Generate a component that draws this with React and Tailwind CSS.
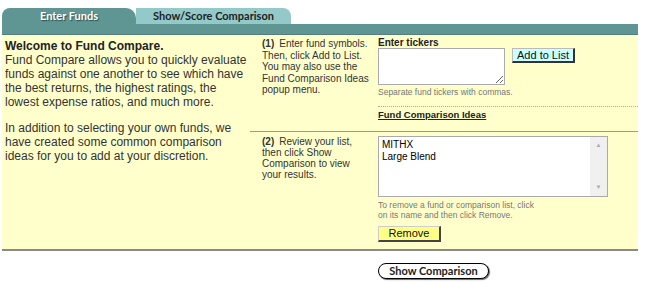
import React from 'react';

const base = "font-['Liberation_Sans',Arial,sans-serif]";

function ListBox() {
  return (
    <div className="flex w-[230px] h-[61px] border border-[#aaa] bg-white">
      <div className="flex-1 pl-[3px] pt-[2px] text-[10px] leading-[12px] text-black">
        <div>MITHX</div>
        <div>Large Blend</div>
      </div>
      <div className="w-[17px] bg-[#f0f0f0] flex flex-col justify-between items-center py-[5px] text-[6px] leading-[7px] text-[#aaa]">
        <span>▲</span>
        <span>▼</span>
      </div>
    </div>
  );
}

export default function App() {
  return (
    <div className={`w-[651px] h-[284px] bg-white ${base} text-[#222]`}>
      <div className="ml-[2px] w-[636px] pt-[8px]">
        {/* tabs */}
        <div className="flex h-[16px] items-end">
          <div className="w-[134px] h-[16px] bg-[#5f9593] rounded-tl-[8px] rounded-tr-[10px] text-white text-[11px] leading-[16px] font-bold text-center [text-shadow:1px_1px_1px_#2d4f4e] font-['Lato',sans-serif]">
            Enter Funds
          </div>
          <div className="w-[155px] h-[16px] bg-[#93c9c9] rounded-tr-[8px] text-[#222] text-[11px] leading-[16px] font-bold text-center font-['Lato',sans-serif]">
            Show/Score Comparison
          </div>
        </div>
        <div className="h-[11px] bg-[#5f9593] border-b border-[#557f7d]" />

        {/* main panel */}
        <div className="flex h-[216px] bg-[#ffffcc] border-b-2 border-[#8a8a8a]">
          <div className="w-[248px] pl-[3px] pt-[4px] text-[12px] leading-[14px] text-[#333]">
            <div className="w-[245px]">
              <div className="font-bold text-[#222]">Welcome to Fund Compare.</div>
              <p>
                Fund Compare allows you to quickly evaluate funds against one another to see which have the best
                returns, the highest ratings, the lowest expense ratios, and much more.
              </p>
              <p className="mt-[12px]">
                In addition to selecting your own funds, we have created some common comparison ideas for you to
                add at your discretion.
              </p>
            </div>
          </div>

          <div className="flex-1 flex flex-col">
            {/* step 1 */}
            <div className="flex h-[96px]">
              <div className="w-[128px] pl-[12px] pt-[3px] text-[10px] leading-[11.5px] text-[#333]">
                <div className="w-[108px]">
                  <div className="flex gap-[5px]">
                    <span className="font-bold">(1)</span>
                    <span>Enter fund symbols.</span>
                  </div>
                  <div>Then, click Add to List. You may also use the Fund Comparison Ideas popup menu.</div>
                </div>
              </div>
              <div className="flex-1 pt-[3px]">
                <div className="text-[10px] leading-[10px] font-bold text-[#222]">Enter tickers</div>
                <div className="flex gap-[7px]">
                  <textarea className="w-[127px] h-[37px] border border-[#aaa] bg-white block" />
                  <button className="h-[15px] w-[63px] bg-[#ccffff] border border-[#bbb] border-r-2 border-b-2 border-r-[#333] border-b-[#333] text-[11px] leading-[12px] text-[#111]">
                    Add to List
                  </button>
                </div>
                <div className="mt-[2px] text-[8.5px] leading-[10px] text-[#777]">Separate fund tickers with commas.</div>
                <div className="mt-[9px] border-t border-dotted border-[#aaa] pt-[3px] text-[9.5px] leading-[10px]">
                  <span className="font-bold underline text-[#222]">Fund Comparison Ideas</span>
                </div>
              </div>
            </div>

            {/* step 2 */}
            <div className="flex flex-1 border-t border-[#999]">
              <div className="w-[128px] pl-[12px] pt-[4px] text-[10px] leading-[11px] text-[#333]">
                <div className="w-[108px]">
                  <div className="flex gap-[5px]">
                    <span className="font-bold">(2)</span>
                    <span>Review your list,</span>
                  </div>
                  <div>then click Show Comparison to view your results.</div>
                </div>
              </div>
              <div className="flex-1 pt-[4px]">
                <ListBox />
                <div className="mt-[3px] w-[160px] text-[8.5px] leading-[10px] text-[#777]">
                  To remove a fund or comparison list, click on its name and then click Remove.
                </div>
                <button className="mt-[1px] w-[63px] h-[16px] bg-[#ffff88] border border-[#ccc] border-r-2 border-b-2 border-r-[#444] border-b-[#444] text-[11px] leading-[12px] text-[#111]">
                  Remove
                </button>
              </div>
            </div>
          </div>
        </div>

        <div className="pl-[376px] pt-[7px]">
          <button className="w-[111px] h-[16px] rounded-full border border-black bg-white shadow-[1px_1px_1px_#666] text-[11px] leading-[14px] font-bold text-[#222] font-['Lato',sans-serif]">
            Show Comparison
          </button>
        </div>
      </div>
    </div>
  );
}
